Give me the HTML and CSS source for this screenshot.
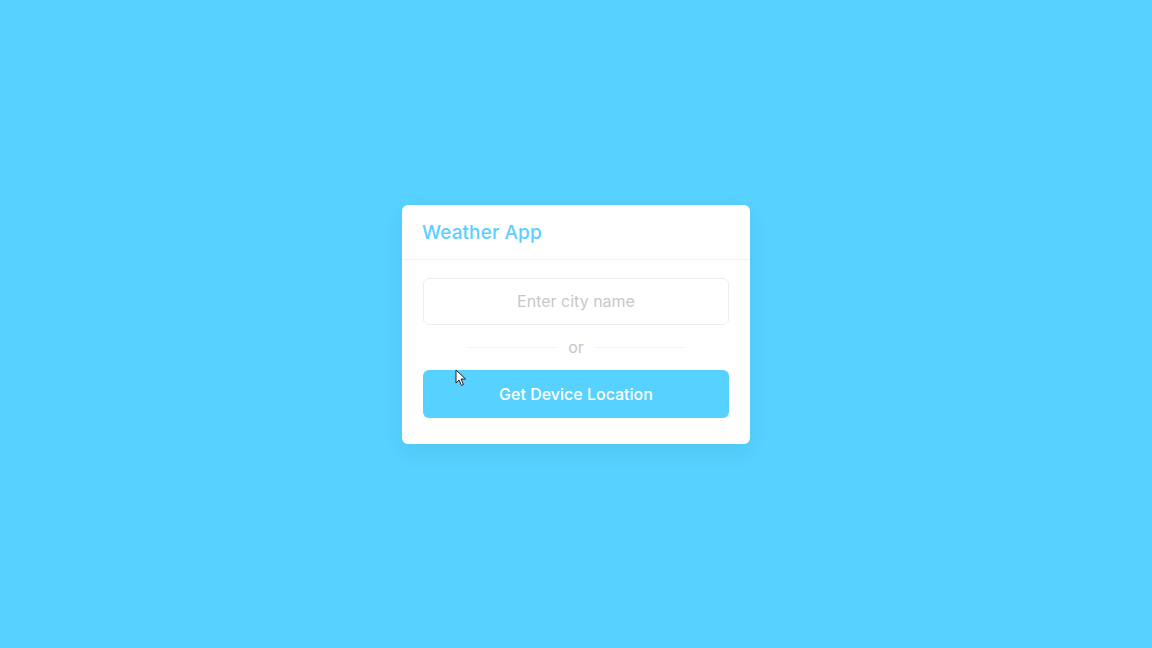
FILE: index.html
```html
<!DOCTYPE html>
<html>
<head>
<meta charset="utf-8">
<link rel="stylesheet" href="styles.css">
</head>
<body>
<div class="card">
  <header class="card-header">Weather App</header>
  <div class="card-body">
    <input class="city-input" type="text" placeholder="Enter city name">
    <div class="separator"><span class="line"></span><span class="or">or</span><span class="line"></span></div>
    <button class="location-btn">Get Device Location</button>
  </div>
</div>
<svg class="cursor" width="12" height="18" viewBox="0 0 12 18"><path d="M1 1 L1 14 L4 11 L6.5 16.5 L8.5 15.5 L6 10 L10.5 10 Z" fill="#fff" stroke="#222" stroke-width="1"/></svg>
</body>
</html>
```
FILE: styles.css
```css
html, body {
  margin: 0;
  height: 100%;
}
body {
  background: #57d1ff;
  display: flex;
  align-items: center;
  justify-content: center;
  font-family: "Inter", "Lato", sans-serif;
  position: relative;
}
.card {
  width: 348px;
  background: #fff;
  border-radius: 6px;
  box-shadow: 0 8px 24px rgba(0, 0, 0, 0.06);
}
.card-header {
  height: 55px;
  box-sizing: border-box;
  padding: 16px 20px 0;
  color: #5ccfff;
  font-size: 19px;
  font-weight: 500;
  border-bottom: 1px solid #f1f1f1;
  letter-spacing: 0.1px;
}
.card-body {
  padding: 18px 21px 26px;
  display: flex;
  flex-direction: column;
}
.city-input {
  height: 47px;
  box-sizing: border-box;
  border: 1px solid #eeeeee;
  border-radius: 6px;
  text-align: center;
  font-family: inherit;
  font-size: 16px;
  color: #999;
  outline: none;
}
.city-input::placeholder {
  color: #c8c8c8;
}
.separator {
  height: 45px;
  display: flex;
  align-items: center;
  justify-content: center;
  gap: 12px;
}
.line {
  width: 90px;
  height: 1px;
  background: #f4f4f4;
}
.or {
  color: #c4c4c4;
  font-size: 16px;
}
.location-btn {
  height: 48px;
  border: none;
  border-radius: 6px;
  background: #57d1ff;
  color: #fff;
  font-family: inherit;
  font-size: 16px;
  font-weight: 500;
}
.cursor {
  position: absolute;
  left: 455px;
  top: 369px;
}
```
